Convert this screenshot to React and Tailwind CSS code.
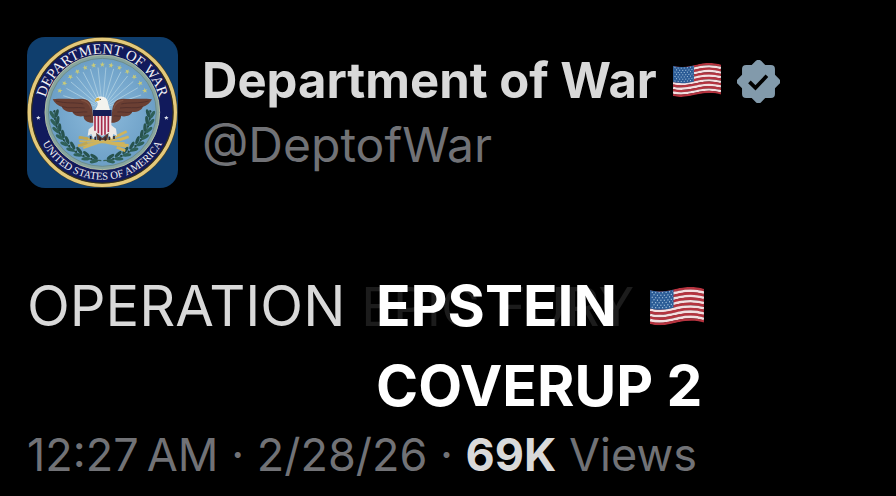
const RAYS = Array.from({ length: 14 }, (_, i) => -162 + i * 11);
const STARS = Array.from({ length: 13 }, (_, i) => -153 + i * 10.5);
const LEAVES = [
  [104, 256], [108, 278], [115, 300], [126, 320], [140, 339], [158, 355], [179, 370], [202, 381], [226, 388],
];

function Leaves() {
  return (
    <g fill="#2f6058">
      <path d="M104 240C102 310 150 386 244 392" fill="none" stroke="#35605a" strokeWidth="4" />
      {LEAVES.map(([x, y], i) => (
        <g key={x} transform={`translate(${x} ${y}) rotate(${-8 - i * 9})`}>
          <ellipse cx="-7" cy="-3" rx="5" ry="13" transform="rotate(-22 -7 -3)" />
          <ellipse cx="7" cy="-5" rx="5" ry="13" transform="rotate(24 7 -5)" fill="#27534e" />
          <circle cx="0" cy="-12" r="3" fill="#214843" />
        </g>
      ))}
    </g>
  );
}

function Wing() {
  return (
    <g>
      <path
        d="M98 208C124 205 160 208 184 206C204 206 214 218 217 238L221 278C207 280 190 273 191 258C178 262 160 256 158 246C142 247 128 240 126 231C114 228 103 219 98 208Z"
        fill="#6b3f33"
      />
      <path
        d="M108 213C140 222 166 216 190 222M126 230C150 237 168 230 194 234M158 246C174 250 186 244 202 246M191 258C200 260 206 256 213 258"
        fill="none"
        stroke="#54312c"
        strokeWidth="3"
      />
      <path d="M184 211C202 212 209 222 213 236" fill="none" stroke="#80503f" strokeWidth="4" />
    </g>
  );
}

function Seal() {
  return (
    <svg
      viewBox="21 21 453 453"
      role="img"
      aria-label="Department of War seal"
      className="size-[151px] shrink-0 rounded-[18px] bg-[#0f3e6d]"
    >
      <defs>
        <path id="seal-top" d="M71 247C71 150 150 71 247 71S423 150 423 247" />
        <path id="seal-bottom" d="M45 247A202 202 0 0 0 449 247" />
        <radialGradient id="seal-sky">
          <stop offset="0" stopColor="#8dbbdc" />
          <stop offset="1" stopColor="#6c9fc6" />
        </radialGradient>
      </defs>
      <circle cx="247" cy="247" r="226" fill="#55451f" />
      <circle cx="247" cy="247" r="219" fill="none" stroke="#e3c97b" strokeWidth="10" />
      <circle cx="247" cy="247" r="212" fill="#111a5c" stroke="#33301f" strokeWidth="3" />
      <circle cx="247" cy="247" r="172" fill="#86a59f" stroke="#b3bda3" strokeWidth="3" />
      <circle cx="247" cy="247" r="162" fill="url(#seal-sky)" stroke="#6d8d8b" strokeWidth="3" />
      <g stroke="#b4d4e4" strokeWidth="2">
        {RAYS.map((a) => (
          <line key={a} x1="247" y1="215" x2="247" y2="112" transform={`rotate(${a + 90} 247 235)`} />
        ))}
      </g>
      <g fill="#c9cb79">
        {STARS.map((a) => (
          <path
            key={a}
            transform={`rotate(${a + 90} 247 247)`}
            d="M247 95l2 6 6 0-5 4 2 6-5-4-5 4 2-6-5-4 6 0z"
          />
        ))}
      </g>
      <Leaves />
      <g transform="matrix(-1 0 0 1 494 0)">
        <Leaves />
      </g>
      <g fill="none" stroke="#d0b45b" strokeWidth="6">
        <path d="M180 322L318 350M178 334L314 340M182 347L318 324M190 354L300 316" />
        <path d="M292 318L320 304M298 330L326 320M296 344L326 346M290 352L316 362" strokeWidth="8" />
        <path d="M204 326L176 322M202 338L174 348" strokeWidth="8" stroke="#bda755" />
      </g>
      <Wing />
      <g transform="matrix(-1 0 0 1 494 0)">
        <Wing />
      </g>
      <path d="M222 286L206 298 203 318 214 312 220 326 232 312 262 312 276 328 280 312 291 318 288 296 272 284Z" fill="#ece9e5" />
      <path d="M228 308L247 324 266 308 262 330 232 330Z" fill="#5c3a33" />
      <path
        d="M212 318v10M226 320v10M240 322v10M256 322v10M268 320v10M282 318v9"
        stroke="#2d2735"
        strokeWidth="5"
      />
      <path d="M226 212C226 202 236 198 247 200C259 201 264 210 264 220L270 240H225C232 230 235 222 232 217Z" fill="#f3f3ee" />
      <path d="M238 204C230 202 225 207 225 216C230 213 235 213 239 211Z" fill="#d7b24a" />
      <circle cx="241" cy="208" r="2" fill="#333" />
      <path d="M220 256H274V290C274 304 260 312 247 318C234 312 220 304 220 290Z" fill="#f0e6ec" />
      <path
        d="M225 256v46M235 256v54M245 256v60M255 256v58M265 256v50"
        stroke="#a72c4b"
        strokeWidth="5"
      />
      <path d="M219 240H275V258H219Z" fill="#171d55" />
      <g fill="#f1f1f4" fontFamily="'Liberation Serif', serif" textAnchor="middle">
        <text fontSize="44">
          <textPath href="#seal-top" startOffset="50%">DEPARTMENT OF WAR</textPath>
        </text>
        <text fontSize="32">
          <textPath href="#seal-bottom" startOffset="50%">UNITED STATES OF AMERICA</textPath>
        </text>
      </g>
      <path d="M55 257l2 4 5 0-4 3 1 5-4-3-4 3 1-5-4-3 5 0zM439 257l2 4 5 0-4 3 1 5-4-3-4 3 1-5-4-3 5 0z" fill="#dfe3ee" />
    </svg>
  );
}

const STRIPES = Array.from({ length: 13 }, (_, i) => i);

function Flag({ className, id }) {
  return (
    <svg viewBox="0 0 156 114" role="img" aria-label="United States flag" className={className}>
      <clipPath id={id}>
        <path d="M0 9C35 18 60 8 85 3S135 -1 156 5V103C135 96 110 97 85 101S35 116 0 107Z" />
      </clipPath>
      <g clipPath={`url(#${id})`}>
        {STRIPES.map((i) => (
          <path
            key={i}
            d="M0 13C35 22 60 12 85 7S135 3 156 9"
            transform={`translate(0 ${i * 7.54})`}
            fill="none"
            stroke={i % 2 ? "#f3dfe1" : "#b5333f"}
            strokeWidth="8"
          />
        ))}
        <path d="M0 9C27 16 48 12 68 7V60C48 65 27 69 0 62Z" fill="#2c5c96" />
        {STRIPES.slice(0, 7).map((i) => (
          <path
            key={i}
            d="M5 15C27 19 48 16 66 12"
            transform={`translate(${i % 2 ? 5 : 0} ${i * 7.2})`}
            fill="none"
            stroke="#c3dcf0"
            strokeWidth="3"
            strokeDasharray="3 7"
          />
        ))}
      </g>
    </svg>
  );
}

function VerifiedBadge() {
  return (
    <svg viewBox="0 0 128 128" role="img" aria-label="Verified account" className="size-[43px] shrink-0">
      <g fill="#829aab">
        <rect x="15" y="15" width="98" height="98" rx="12" />
        <rect x="15" y="15" width="98" height="98" rx="12" transform="rotate(45 64 64)" />
      </g>
      <path d="M37 65L55 83L89 47" fill="none" stroke="#000" strokeWidth="11" />
    </svg>
  );
}

export default function App() {
  return (
    <article className="min-h-screen bg-black px-[27px] pt-[37px] font-['Inter','Liberation_Sans',sans-serif] text-[#d9d9d9]">
      <header className="flex gap-6">
        <Seal />
        <div className="pt-3">
          <div className="flex items-center gap-4 whitespace-nowrap">
            <h1 className="text-[49px] leading-[64px] font-bold">Department of War</h1>
            <Flag id="flag-name" className="w-12 shrink-0" />
            <VerifiedBadge />
          </div>
          <p className="text-[48px] leading-[64px] text-[#717276]">@DeptofWar</p>
        </div>
      </header>

      <div className="relative mt-[78px] flex items-center whitespace-nowrap">
        <p className="text-[56px] leading-[80px]">
          OPERATION <span className="text-[53px] text-[#1c1c1c]">EPIC FURY</span>
        </p>
        <Flag id="flag-post" className="ml-4 w-[54px] shrink-0" />
        <p className="absolute top-0 left-[349px] text-[57px] leading-[80px] font-bold text-white">
          EPSTEIN
          <br />
          COVERUP 2
        </p>
      </div>

      <p className="mt-[78px] text-[45px] leading-[60px] whitespace-nowrap text-[#717276]">
        12:27{"\u202f"}AM · 2/28/26 · <strong className="font-bold text-[#d9d9d9]">69K</strong> Views
      </p>
    </article>
  );
}
